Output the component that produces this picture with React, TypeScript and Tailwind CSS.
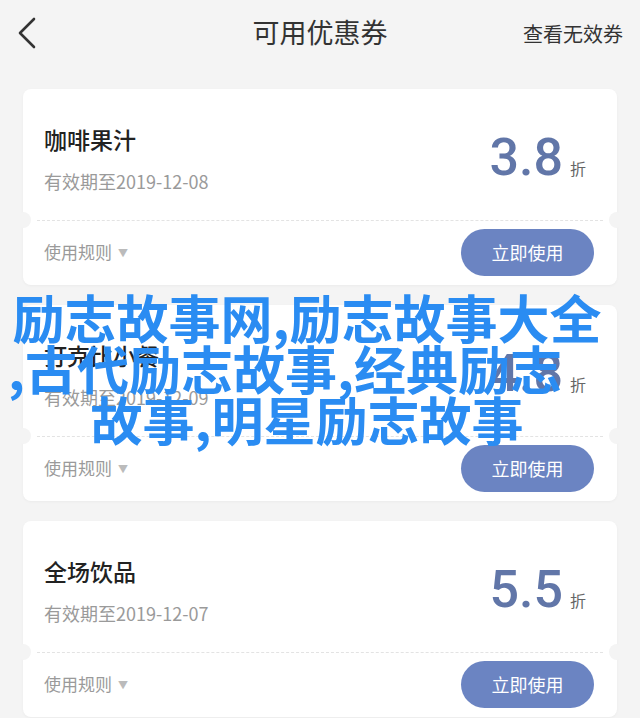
import React from "react";

type Coupon = { name: string; date: string; value: string };

const coupons: Coupon[] = [
  { name: "咖啡果汁", date: "有效期至2019-12-08", value: "3.8" },
  { name: "打克比小餐", date: "有效期至2019-12-09", value: "4.8" },
  { name: "全场饮品", date: "有效期至2019-12-07", value: "5.5" },
];

const cjk = { fontFamily: '"Noto Sans CJK SC", "Noto Sans", sans-serif' };

function Card({ c }: { c: Coupon }) {
  return (
    <div className="relative w-[594px] h-[196px] mx-auto bg-white rounded-[8px] shadow-[0_1px_3px_rgba(0,0,0,0.04)] flex flex-col">
      <div className="h-[131px] flex justify-between pl-[21px] pr-[31px]">
        <div className="flex flex-col pt-[36px]">
          <div className="text-[23px] leading-[28px] font-medium text-[#222]">{c.name}</div>
          <div className="mt-[16px] text-[18px] leading-[24px] text-[#9a9a9a]">{c.date}</div>
        </div>
        <div className="flex items-baseline pt-[39px]">
          <span
            className="text-[52px] leading-[60px] font-medium text-[#6176a8]"
            style={{ fontFamily: 'Roboto, "Liberation Sans", sans-serif' }}
          >
            {c.value}
          </span>
          <span className="ml-[7px] text-[16px] text-[#666]">折</span>
        </div>
      </div>
      <div className="mx-[14px] border-t border-dashed border-[#e3e3e3]" />
      <div className="flex-1 flex items-center justify-between pl-[21px] pr-[23px] pb-[2px]">
        <div className="flex items-center text-[17px] text-[#9a9a9a]">
          使用规则
          <span className="ml-[6px] text-[10px] text-[#bbb]">▼</span>
        </div>
        <button className="w-[133px] h-[47px] rounded-full bg-[#6b84c2] text-white text-[18px]">
          立即使用
        </button>
      </div>
      <div className="absolute left-[-8px] top-[123px] w-[16px] h-[16px] rounded-full bg-[#f4f4f4]" />
      <div className="absolute right-[-8px] top-[123px] w-[16px] h-[16px] rounded-full bg-[#f4f4f4]" />
    </div>
  );
}

export default function App() {
  return (
    <div className="relative w-[640px] h-[718px] overflow-hidden bg-[#f4f4f4]" style={cjk}>
      <div className="h-[67px] flex items-center justify-between pl-[18px] pr-[17px]">
        <svg width="20" height="32" viewBox="0 0 20 32" className="mt-[-2px]">
          <path d="M16 2 L2 16 L16 30" fill="none" stroke="#333" strokeWidth="2.6" strokeLinecap="round" strokeLinejoin="round" />
        </svg>
        <div className="absolute left-0 right-0 top-[12px] text-center text-[27px] leading-[40px] text-[#333] pointer-events-none">
          可用优惠券
        </div>
        <div className="text-[20px] text-[#333]">查看无效券</div>
      </div>
      <div className="flex flex-col gap-[20px] pt-[22px]">
        {coupons.map((c) => (
          <Card key={c.value} c={c} />
        ))}
      </div>
      <div
        className="absolute left-0 top-[291px] w-[614px] text-center font-bold text-[52px] leading-[51px] text-[#2a8cf2]"
        style={cjk}
      >
        <div>励志故事网,励志故事大全</div>
        <div className="pr-[44px]">,古代励志故事,经典励志</div>
        <div>故事,明星励志故事</div>
      </div>
    </div>
  );
}
